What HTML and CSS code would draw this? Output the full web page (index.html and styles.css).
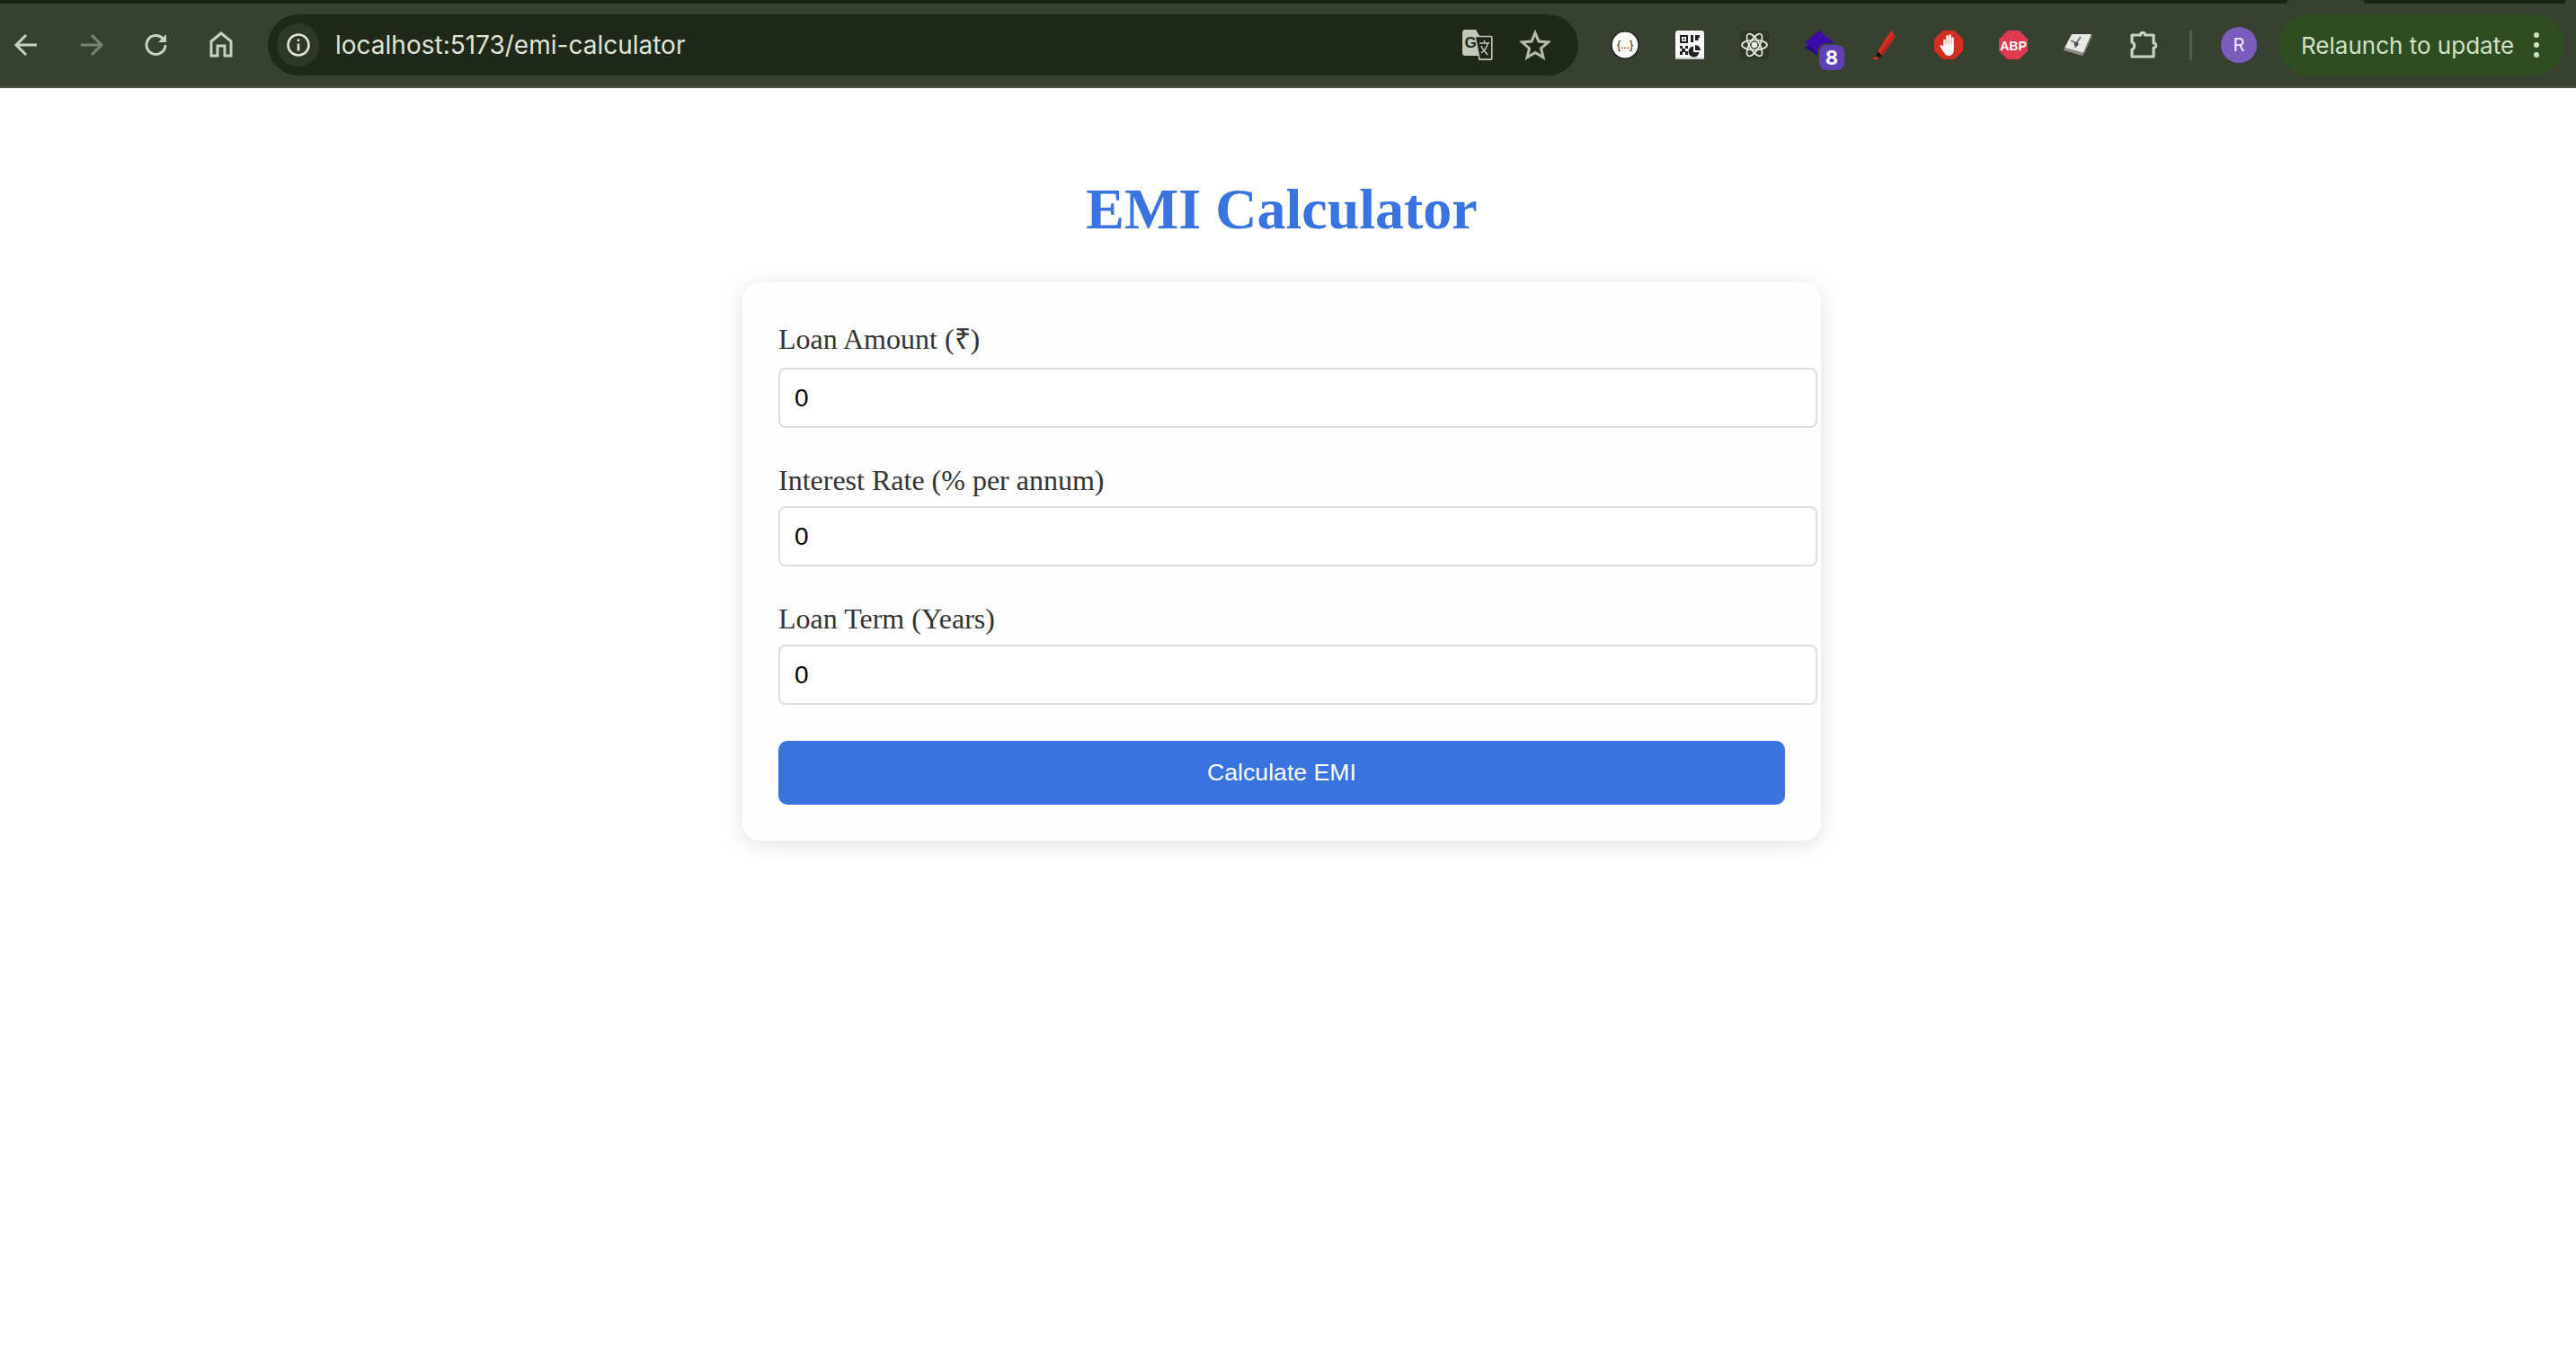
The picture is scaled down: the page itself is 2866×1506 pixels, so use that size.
FILE: index.html
```html
<!DOCTYPE html>
<html lang="en">

<head>
    <meta charset="UTF-8">
    <title>EMI Calculator</title>
    <link rel="stylesheet" href="styles.css">
</head>

<body>
    <!-- browser toolbar -->
    <header class="toolbar">
        <div class="tab-notch"></div>
        <div class="corner-notch"></div>
        <div class="icon">
            <svg width="40" height="40" viewBox="0 0 40 40" fill="none" stroke="#c8d2ba" stroke-width="3"><path d="M31 20H8M19 9 8 20l11 11"/></svg>
        </div>
        <div class="icon">
            <svg width="40" height="40" viewBox="0 0 40 40" fill="none" stroke="#7a8470" stroke-width="3"><path d="M8 20h23M20 9l11 11-11 11"/></svg>
        </div>
        <div class="icon">
            <svg width="40" height="40" viewBox="0 0 40 40" fill="none" stroke="#c8d2ba" stroke-width="3"><path d="M30 20a10.500 10.500 0 1 1-3-7.400L30 16"/><path d="M31 8v9h-9" stroke="none" fill="#c8d2ba"/></svg>
        </div>
        <div class="icon">
            <svg width="40" height="40" viewBox="0 0 40 40" fill="none" stroke="#c8d2ba" stroke-width="3"><path d="M9 32V16L20 7l11 9v16h-7V21h-8v11z"/></svg>
        </div>

        <div class="omnibox">
            <div class="site-chip">
                <svg width="30" height="30" viewBox="0 0 30 30" fill="none" stroke="#dfe5d6" stroke-width="2.600"><circle cx="15" cy="15" r="11.500"/><path d="M15 13.500v8M15 8.500v2.600"/></svg>
            </div>
            <span class="url">localhost:5173/emi-calculator</span>
            <div class="omni-actions">
                <svg width="34" height="34" viewBox="0 0 34 34">
                    <path d="M3 0h12l4 7v22H3a3 3 0 0 1-3-3V3a3 3 0 0 1 3-3z" fill="#c4c9ba"/>
                    <path d="M14 7.500h18a.8.800 0 0 1 .8.800v24a.8.800 0 0 1-.8.800H19z" fill="#20281a" stroke="#c4c9ba" stroke-width="1.600"/>
                    <text x="2.500" y="20" class="g-letter">G</text>
                    <path d="M19 15h11M24.500 12v3M28 15c-1 6-4 9-7 11M21 18c1 3 4 6 7 10" fill="none" stroke="#c4c9ba" stroke-width="1.500"/>
                </svg>
                <svg width="34" height="34" viewBox="0 0 34 34" fill="none" stroke="#b6bcaa" stroke-width="3"><path d="m17 3.500 4 9.600 10.500.8-8 6.800 2.500 10.200-9-5.500-9 5.500 2.500-10.200-8-6.800 10.500-.8z"/></svg>
            </div>
        </div>

        <div class="extensions">
            <div class="icon">
                <svg width="32" height="32" viewBox="0 0 32 32">
                    <circle cx="16" cy="16" r="15" fill="#fff" stroke="#111" stroke-width="1.200"/>
                    <text x="16" y="20" class="json-text">{...}</text>
                </svg>
            </div>
            <div class="icon">
                <svg width="32" height="32" viewBox="0 0 32 32">
                    <rect width="32" height="32" rx="3" fill="#fff"/>
                    <path d="M5 5h9v9H5zM7 7v5h5V7zM8.500 8.500h2v2h-2zM17 5h3v8h-3zM22 5h5v3h-1.500v3H22z" fill-rule="evenodd" fill="#222"/>
                    <path d="M5 17h3v3h3v3h3v4h-3v-3H8v3H5v-4h2v-3H5zM11 17h3v3h-3z" fill="#222"/>
                    <path d="M20 17.500a6 6 0 1 0 6.500 6.500H20z" fill="#222"/>
                    <path d="M22 16a6 6 0 0 1 6 6h-6z" fill="#222"/>
                    <rect y="30" width="32" height="2" fill="#c9c9c9"/>
                </svg>
            </div>
            <div class="icon">
                <svg width="32" height="32" viewBox="0 0 32 32" fill="none" stroke="#e8ebe3" stroke-width="1.700">
                    <rect width="32" height="32" fill="#2f3727" stroke="none"/>
                    <ellipse cx="16" cy="16" rx="14" ry="5.500"/>
                    <ellipse cx="16" cy="16" rx="14" ry="5.500" transform="rotate(60 16 16)"/>
                    <ellipse cx="16" cy="16" rx="14" ry="5.500" transform="rotate(120 16 16)"/>
                    <circle cx="16" cy="16" r="2.600" fill="#e8ebe3"/>
                </svg>
            </div>
            <div class="icon icon-stack">
                <svg width="32" height="32" viewBox="0 0 32 32">
                    <path d="M0 19 8 13l16 8-8 8z" fill="#2b0c80"/>
                    <path d="M0 13 16 0l16 13-16 13z" fill="#3d0ca8"/>
                </svg>
                <span class="count-badge">8</span>
            </div>
            <div class="icon">
                <svg width="26" height="32" viewBox="0 0 26 32">
                    <path d="M21 0l5 7-15 21-5-5z" fill="#d93025"/>
                    <path d="M23.500 3.500 26 7 11 28l-2.500-2.500z" fill="#b5281e"/>
                    <path d="m6 23 5 5-2 2-5-1z" fill="#161616"/>
                    <path d="m0 32 3-3 4 1-1 2z" fill="#d93025"/>
                </svg>
            </div>
            <div class="icon">
                <svg width="32" height="32" viewBox="0 0 32 32">
                    <path d="M9.500 0h13L32 9.500v13L22.500 32h-13L0 22.500v-13z" fill="#d52d22"/>
                    <path d="M11.500 18v-7M14.500 17V6.500M17.500 17V5.500M20.500 18V8.500" fill="none" stroke="#fff" stroke-width="2.500" stroke-linecap="round"/>
                    <path d="M8 17.500l3.500 5.500" fill="none" stroke="#fff" stroke-width="2.800" stroke-linecap="round"/>
                    <path d="M10.500 15h11.200v7c0 3.500-2.500 6-5.500 6-2.800 0-4.500-1.500-5.700-5z" fill="#fff"/>
                </svg>
            </div>
            <div class="icon">
                <svg width="32" height="32" viewBox="0 0 32 32">
                    <path d="M9.500 0h13L32 9.500v13L22.500 32h-13L0 22.500v-13z" fill="#df3a52"/>
                    <text x="16" y="21.500" class="abp-text">ABP</text>
                </svg>
            </div>
            <div class="icon">
                <svg width="32" height="26" viewBox="0 0 32 26">
                    <path d="M9 1h22L22 22 1 16z" fill="#e8e8e4"/>
                    <path d="M1 16l21 6-1 3L0 19z" fill="#8f8f8a"/>
                    <path d="M22 22l9-21 1 3-10 21z" fill="#6e6e6a"/>
                    <path d="M19 4l-5 7-6-3M14 11l-1 5" fill="none" stroke="#6a6a66" stroke-width="1.800"/>
                    <circle cx="14" cy="12" r="2.500" fill="#55554f"/>
                </svg>
            </div>
            <div class="icon">
                <svg width="36" height="36" viewBox="0 0 36 36" fill="none" stroke="#c8d2ba" stroke-width="3.200" stroke-linejoin="round"><path d="M6 7h9.500c0-3.500 5-3.500 5 0H30v9c3.500 0 3.500 5 0 5v10H6v-8c3.500-1 3.500-7 0-8z"/></svg>
            </div>
        </div>

        <div class="divider"></div>
        <div class="avatar">R</div>
        <div class="relaunch">
            <span>Relaunch to update</span>
            <div class="dots"><i></i><i></i><i></i></div>
        </div>
    </header>

    <main>
        <h1>EMI Calculator</h1>
        <form class="card">
            <div class="group">
                <label class="label-rupee" for="amount">Loan Amount (₹)</label>
                <input type="number" id="amount" value="0">
            </div>
            <div class="group">
                <label for="rate">Interest Rate (% per annum)</label>
                <input type="number" id="rate" value="0">
            </div>
            <div class="group">
                <label for="term">Loan Term (Years)</label>
                <input type="number" id="term" value="0">
            </div>
            <button type="button">Calculate EMI</button>
        </form>
    </main>
</body>

</html>
```

FILE: styles.css
```css
* {
    margin: 0;
}

body {
    font-family: "Liberation Serif", serif;
    background-color: #fff;
}

/* toolbar */
.toolbar {
    position: relative;
    display: flex;
    align-items: center;
    gap: 32px;
    height: 92px;
    padding: 0 12px 0 10px;
    border-top: 4px solid #1b2314;
    border-bottom: 2px solid #4c5246;
    background-color: #384130;
}

.tab-notch {
    position: absolute;
    top: -4px;
    left: 2544px;
    width: 87px;
    height: 4px;
    border-radius: 4px 4px 0 0;
    background-color: #384130;
}

.corner-notch {
    position: absolute;
    top: -4px;
    right: 0;
    width: 12px;
    height: 4px;
    background-color: #384130;
}

.icon {
    position: relative;
    display: flex;
    flex-shrink: 0;
    align-items: center;
    justify-content: center;
    width: 40px;
    height: 40px;
}

.omnibox {
    display: flex;
    flex-shrink: 0;
    align-items: center;
    box-sizing: border-box;
    width: 1458px;
    height: 68px;
    padding: 0 31px 0 10px;
    border-radius: 34px;
    background-color: #20281a;
}

.site-chip {
    display: flex;
    align-items: center;
    justify-content: center;
    width: 47px;
    height: 48px;
    border-radius: 24px;
    background-color: #2f3827;
}

.url {
    margin-left: 18px;
    font-family: Inter, sans-serif;
    font-size: 28px;
    color: #dfe5d6;
}

.omni-actions {
    display: flex;
    align-items: center;
    gap: 30px;
    margin-left: auto;
}

.g-letter {
    font-family: "Liberation Sans", sans-serif;
    font-size: 17px;
    font-weight: bold;
    fill: #20281a;
}

.extensions {
    display: flex;
    align-items: center;
    gap: 32px;
}

.json-text {
    font-family: "Liberation Sans", sans-serif;
    font-size: 12px;
    text-anchor: middle;
    fill: #111;
}

.abp-text {
    font-family: "Liberation Sans", sans-serif;
    font-size: 14px;
    font-weight: bold;
    text-anchor: middle;
    fill: #fff;
}

.count-badge {
    position: absolute;
    top: 20px;
    left: 20px;
    width: 28px;
    height: 28px;
    border-radius: 8px;
    font-family: Inter, sans-serif;
    font-size: 22px;
    font-weight: bold;
    line-height: 28px;
    text-align: center;
    color: #fff;
    background-color: #6040b4;
    box-shadow: 0 0 0 2px #384130;
}

.divider {
    flex-shrink: 0;
    width: 3px;
    height: 33px;
    background-color: #545d4b;
}

.avatar {
    flex-shrink: 0;
    width: 40px;
    height: 40px;
    border-radius: 50%;
    font-family: Inter, sans-serif;
    font-size: 20px;
    line-height: 40px;
    text-align: center;
    color: #f2eefa;
    background-color: #7a5cbd;
}

.relaunch {
    display: flex;
    flex-shrink: 0;
    align-items: center;
    box-sizing: border-box;
    width: 318px;
    height: 68px;
    margin-left: -8px;
    padding-left: 25px;
    border-radius: 34px;
    font-family: Inter, sans-serif;
    font-size: 26px;
    color: #d3e0c6;
    background-color: #2e4d22;
}

.dots {
    display: flex;
    flex-direction: column;
    gap: 5px;
    margin-left: 22px;
}

.dots i {
    width: 6px;
    height: 6px;
    border-radius: 50%;
    background-color: #d3e0c6;
}

/* page */
main {
    min-height: 1408px;
    padding-right: 14px;
}

h1 {
    margin: 0;
    padding-top: 98px;
    font-size: 64px;
    line-height: 74px;
    text-align: center;
    color: #3873e0;
}

.card {
    width: 1120px;
    margin: 44px auto 0;
    padding: 40px;
    border-radius: 20px;
    background-color: #fefefe;
    box-shadow: 0 4px 24px rgba(0, 0, 0, 0.12);
}

.group {
    margin-bottom: 40px;
}

label {
    display: block;
    margin-bottom: 10px;
    font-size: 32px;
    line-height: 37px;
    color: #333;
}

.label-rupee {
    margin-bottom: 13px;
    padding-top: 5px;
}

input {
    display: block;
    width: 100%;
    height: 31px;
    padding: 16px;
    border: 2px solid #ddd;
    border-radius: 8px;
    font-family: "Liberation Sans", sans-serif;
    font-size: 28px;
    color: #000;
    background-color: #fff;
    appearance: textfield;
}

button {
    display: block;
    width: 100%;
    height: 71px;
    border: none;
    border-radius: 10px;
    font-family: "Liberation Sans", sans-serif;
    font-size: 26.67px;
    color: #fff;
    background-color: #3873e0;
}
```
